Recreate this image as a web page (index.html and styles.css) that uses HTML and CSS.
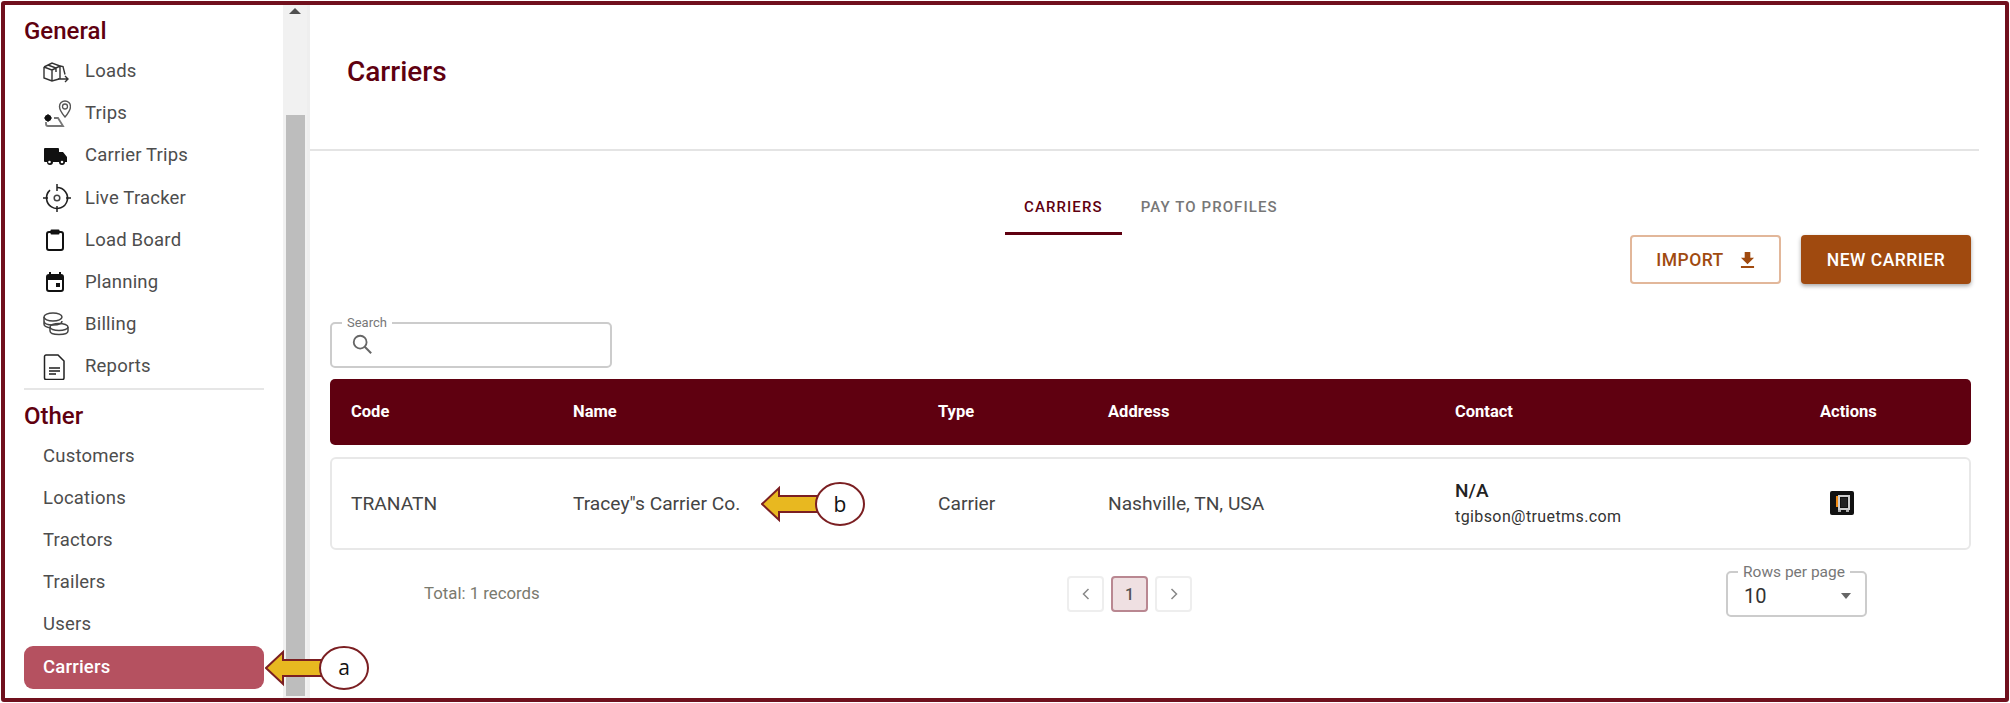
FILE: index.html
```html
<!DOCTYPE html>
<html lang="en">
<head>
<meta charset="utf-8">
<title>Carriers</title>
<link rel="stylesheet" href="styles.css">
</head>
<body>
<div class="frame">
  <aside class="sidebar">
    <h2 class="group-title first">General</h2>
    <nav class="menu">
      <a class="item"><svg class="icon" viewBox="0 0 28 28"><g fill="none" stroke="#333" stroke-width="1.400"><path d="M1 10l8-4 8 3v13M1 10v11l8 3 7-2M1 10l8 3v11M9 13l8-4M5 8l8 3v4M17 9l3 .5 2 8"/><path d="M15 22h10M22 19l3 3-3 3"/></g></svg>Loads</a>
      <a class="item"><svg class="icon" viewBox="0 0 28 28"><path d="M22 2a5.500 5.500 0 0 1 5.500 5.500C27.500 11.500 22 18 22 18s-5.500-6.500-5.500-10.500A5.500 5.500 0 0 1 22 2z" fill="none" stroke="#555" stroke-width="1.400"/><circle cx="22" cy="7.500" r="2.500" fill="none" stroke="#555" stroke-width="1.300"/><circle cx="5" cy="19" r="3.200" fill="#111"/><path d="M1 19h8M5 15v8" stroke="#111" stroke-width="1"/><path d="M3 23v2q0 2 2 2h15l-5-8h-4" fill="none" stroke="#777" stroke-width="1.800"/></svg>Trips</a>
      <a class="item"><svg class="icon" viewBox="0 0 28 28"><path d="M2 7h13a1 1 0 0 1 1 1v3h4l4 5v5h-2a3 3 0 0 1-6 0h-6a3 3 0 0 1-6 0H2a1 1 0 0 1-1-1V8a1 1 0 0 1 1-1z" fill="#111"/><circle cx="6.500" cy="21" r="1.300" fill="#fff"/><circle cx="19" cy="21" r="1.300" fill="#fff"/></svg>Carrier Trips</a>
      <a class="item"><svg class="icon" viewBox="0 0 28 28"><path d="M14 3.500a10.500 10.500 0 1 1-7 2.700" fill="none" stroke="#222" stroke-width="1.600"/><circle cx="14" cy="14" r="2.800" fill="none" stroke="#444" stroke-width="1.500"/><path d="M14 0v7M14 22v6M0 14h5M23 14h5" stroke="#222" stroke-width="1.500"/></svg>Live Tracker</a>
      <a class="item"><svg class="icon" viewBox="0 0 28 28"><rect x="4" y="6" width="16" height="18" rx="2" fill="none" stroke="#111" stroke-width="2"/><rect x="7.500" y="3.500" width="9" height="5" rx="1" fill="#111"/></svg>Load Board</a>
      <a class="item"><svg class="icon" viewBox="0 0 28 28"><path d="M7 4v3M17 4v3" stroke="#111" stroke-width="2"/><rect x="4" y="7" width="16" height="16" rx="2" fill="none" stroke="#111" stroke-width="2"/><rect x="4" y="7" width="16" height="5" fill="#111"/><rect x="13" y="15" width="4" height="4" fill="#111"/></svg>Planning</a>
      <a class="item"><svg class="icon" viewBox="0 0 28 28"><g fill="none" stroke="#444" stroke-width="1.500"><ellipse cx="10" cy="7" rx="9" ry="4"/><path d="M1 7v4c0 2.500 4 4 9 4s9-1.500 9-4M1 11v3c0 2 3 3.500 7 4"/><ellipse cx="16" cy="17" rx="9" ry="3.500"/><path d="M7 17v4c0 2.500 4 3.500 9 3.500s9-1 9-3.500v-4"/></g></svg>Billing</a>
      <a class="item"><svg class="icon" viewBox="0 0 28 28"><path d="M3 3h12l6 6v17a1.500 1.500 0 0 1-1.500 1.500h-16.500a1.500 1.500 0 0 1-1.500-1.500V4.500A1.500 1.500 0 0 1 3 3z" fill="none" stroke="#222" stroke-width="1.500"/><path d="M6 16h11M6 19h11M6 22h7" stroke="#555" stroke-width="2"/></svg>Reports</a>
    </nav>
    <div class="rule"></div>
    <h2 class="group-title">Other</h2>
    <nav class="menu">
      <a class="item plain">Customers</a>
      <a class="item plain">Locations</a>
      <a class="item plain">Tractors</a>
      <a class="item plain">Trailers</a>
      <a class="item plain">Users</a>
      <a class="item plain active">Carriers</a>
    </nav>
  </aside>
  <div class="scrollbar">
    <div class="scroll-up"></div>
    <div class="scroll-thumb"></div>
  </div>
  <main class="main">
    <header class="page-head"><h1>Carriers</h1></header>
    <div class="tabs">
      <span class="tab selected">CARRIERS</span>
      <span class="tab">PAY TO PROFILES</span>
    </div>
    <div class="actions">
      <button class="btn outline">IMPORT
        <svg class="btn-icon" viewBox="0 0 16 18"><path d="M5 1h6v6h4l-7 7-7-7h4zM1 16h14v2H1z" fill="#a04a0f"/></svg>
      </button>
      <button class="btn solid">NEW CARRIER</button>
    </div>
    <div class="search">
      <span class="float-label">Search</span>
      <svg class="search-icon" viewBox="0 0 24 24"><circle cx="10" cy="10" r="7" fill="none" stroke="#666" stroke-width="2"/><path d="M15 15l7 7" stroke="#666" stroke-width="2.200"/></svg>
    </div>
    <div class="grid head">
      <span>Code</span><span>Name</span><span>Type</span><span>Address</span><span>Contact</span><span>Actions</span>
    </div>
    <div class="grid row">
      <span>TRANATN</span>
      <span>Tracey"s Carrier Co.</span>
      <span>Carrier</span>
      <span>Nashville, TN, USA</span>
      <div class="contact"><strong>N/A</strong><small>tgibson@truetms.com</small></div>
      <svg class="action-icon" viewBox="0 0 24 24"><rect width="24" height="24" rx="2" fill="#111"/><path d="M6 5h3l-1 11H6z" fill="#f08a12"/><rect x="9" y="5" width="10" height="13" fill="none" stroke="#ccc" stroke-width="2"/><rect x="11" y="7" width="6" height="9" fill="#222"/><path d="M8 19h3v2H8zM16 19h3v2h-3z" fill="#aaa"/></svg>
    </div>
    <div class="footer">
      <span class="total">Total: 1 records</span>
      <div class="pager">
        <span class="page"><svg class="chev" viewBox="0 0 10 14"><path d="M7.500 2L2.500 7l5 5" fill="none" stroke="#888" stroke-width="1.500"/></svg></span>
        <span class="page current">1</span>
        <span class="page"><svg class="chev" viewBox="0 0 10 14"><path d="M2.500 2l5 5-5 5" fill="none" stroke="#888" stroke-width="1.500"/></svg></span>
      </div>
      <div class="rows">
        <span class="float-label wide">Rows per page</span>
        <span class="rows-value">10</span>
        <span class="caret"></span>
      </div>
    </div>
  </main>
  <svg class="callout callout-a" viewBox="0 0 105 46"><path d="M1 23l17-16v8h40v16H18v8z" fill="#e8b820" stroke="#7b1f22" stroke-width="2"/><ellipse cx="79" cy="23" rx="24" ry="21" fill="#fff" stroke="#7b1f22" stroke-width="2"/></svg>
  <span class="callout-letter letter-a">a</span>
  <svg class="callout callout-b" viewBox="0 0 105 46"><path d="M1 23l17-16v8h40v16H18v8z" fill="#e8b820" stroke="#7b1f22" stroke-width="2"/><ellipse cx="79" cy="23" rx="24" ry="21" fill="#fff" stroke="#7b1f22" stroke-width="2"/></svg>
  <span class="callout-letter letter-b">b</span>
</div>
</body>
</html>
```

FILE: styles.css
```css
* { box-sizing: border-box; }
html, body { margin: 0; padding: 0; background: #fff; }
body { font-family: Roboto, "Liberation Sans", sans-serif; color: #333; }
.frame {
  position: relative;
  display: flex;
  width: 2008px;
  height: 701px;
  margin: 1px 0 0 1px;
  border: 4px solid #70101d;
  border-radius: 3px;
  overflow: hidden;
  background: #fff;
}
.sidebar { flex: 0 0 278px; padding: 0 19px; }
.group-title {
  margin: 0;
  height: 34px;
  font-size: 24px;
  line-height: 34px;
  font-weight: 500;
  color: #5f0010;
}
.group-title.first { margin-top: 9px; margin-bottom: 2px; }
.menu { display: flex; flex-direction: column; }
.item {
  display: flex;
  align-items: center;
  height: 42.2px;
  padding-left: 19px;
  font-size: 18.5px;
  color: #4d4d4d;
  letter-spacing: 0.2px;
}
.icon { flex: 0 0 28px; width: 28px; height: 28px; margin-right: 14px; }
.item.active {
  height: 43px;
  margin-top: 1px;
  padding-bottom: 2px;
  color: #fff;
  font-weight: 500;
  background: #b55160;
  border-radius: 9px;
}
.group-title + .menu .plain:first-child { margin-top: 2px; }
.rule { height: 2px; margin-bottom: 9px; background: #e6e6e6; }
.scrollbar {
  flex: 0 0 24px;
  display: flex;
  flex-direction: column;
  align-items: center;
  background: #f1f1f1;
}
.scroll-up {
  width: 0;
  height: 0;
  margin-top: 3px;
  border-left: 6px solid transparent;
  border-right: 6px solid transparent;
  border-bottom: 6px solid #505050;
}
.scroll-thumb { width: 19px; height: 581px; margin-top: 101px; background: #bdbdbd; }
.main {
  flex: 1;
  min-width: 0;
  display: flex;
  flex-direction: column;
  border-left: 3px solid #eee;
}
.page-head {
  height: 146px;
  padding: 49px 0 0 37px;
  margin-right: 26px;
  border-bottom: 2px solid #e4e4e4;
}
.page-head h1 { margin: 0; font-size: 28px; line-height: 36px; font-weight: 500; color: #5f0010; }
.tabs { display: flex; margin: 0 0 0 695px; height: 84px; align-items: flex-end; }
.tab {
  height: 57px;
  padding: 19px 19px 0;
  font-size: 15px;
  line-height: 20px;
  font-weight: 500;
  letter-spacing: 1.1px;
  color: #777;
}
.tab.selected { color: #5f0010; border-bottom: 3px solid #5f0010; }
.actions { display: flex; justify-content: flex-end; gap: 20px; padding-right: 34px; height: 49px; }
.btn {
  height: 49px;
  font-family: inherit;
  font-size: 17.500px;
  font-weight: 500;
  letter-spacing: 0.5px;
  border-radius: 4px;
  display: flex;
  align-items: center;
  justify-content: center;
}
.btn.outline { width: 151px; gap: 16px; background: #fff; color: #a04a0f; border: 2px solid #e2b79a; }
.btn-icon { width: 15px; height: 17px; }
.btn.solid { width: 170px; background: #a04a0f; color: #fff; border: 0; box-shadow: 0 2px 4px rgba(0,0,0,.35); }
.search {
  position: relative;
  width: 282px;
  height: 46px;
  margin: 38px 0 0 20px;
  border: 2px solid #ccc;
  border-radius: 5px;
}
.float-label {
  position: absolute;
  top: -8px;
  left: 10px;
  padding: 0 5px;
  background: #fff;
  font-size: 13px;
  line-height: 14px;
  color: #777;
}
.float-label.wide { font-size: 15.500px; top: -10px; line-height: 18px; }
.search-icon { position: absolute; left: 19px; top: 9px; width: 22px; height: 22px; }
.grid {
  display: grid;
  grid-template-columns: 222px 365px 170px 347px 365px 1fr;
  align-items: center;
  margin: 0 34px 0 20px;
  padding-left: 21px;
}
.head {
  height: 66px;
  margin-top: 11px;
  padding-bottom: 2px;
  background: #5f0010;
  border-radius: 5px;
  color: #fff;
  font-size: 16.500px;
  font-weight: 700;
}
.row {
  height: 93px;
  margin-top: 12px;
  padding-bottom: 1px;
  border: 2px solid #e8e8e8;
  border-radius: 6px;
  padding-left: 19px;
  font-size: 19.200px;
  color: #444;
}
.contact { display: flex; flex-direction: column; gap: 5px; }
.contact strong { font-size: 19px; font-weight: 500; color: #222; line-height: 22px; }
.contact small { font-size: 16px; letter-spacing: 0.4px; color: #333; line-height: 20px; }
.action-icon { width: 24px; height: 24px; margin-left: 10px; }
.footer { position: relative; display: flex; align-items: flex-start; margin: 21px 34px 0 20px; height: 46px; }
.total { width: 737px; padding: 12px 0 0 94px; font-size: 16.800px; color: #7a7a6e; }
.pager { display: flex; gap: 7px; margin-top: 5px; }
.page {
  display: flex;
  align-items: center;
  justify-content: center;
  width: 37px;
  height: 36px;
  border: 2px solid #eee;
  border-radius: 4px;
  font-size: 16px;
  font-weight: 500;
  color: #555;
}
.page.current { background: #efe0e2; border-color: #b98791; }
.chev { width: 10px; height: 14px; }
.rows {
  position: relative;
  display: flex;
  align-items: center;
  justify-content: space-between;
  width: 141px;
  height: 46px;
  margin-left: auto;
  margin-right: 104px;
  padding: 4px 14px 0 16px;
  border: 2px solid #ccc;
  border-radius: 5px;
}
.rows-value { font-size: 20px; color: #333; }
.caret { width: 0; height: 0; border-left: 5.500px solid transparent; border-right: 5.500px solid transparent; border-top: 6px solid #666; }
.callout { position: absolute; width: 105px; height: 46px; }
.callout-a { left: 260px; top: 640px; }
.callout-b { left: 756px; top: 476px; }
.callout-letter {
  position: absolute;
  width: 30px;
  text-align: center;
  font-family: "Open Sans", sans-serif;
  font-size: 21px;
  line-height: 28px;
  color: #111;
}
.letter-a { left: 324px; top: 648px; }
.letter-b { left: 820px; top: 485px; }
```
